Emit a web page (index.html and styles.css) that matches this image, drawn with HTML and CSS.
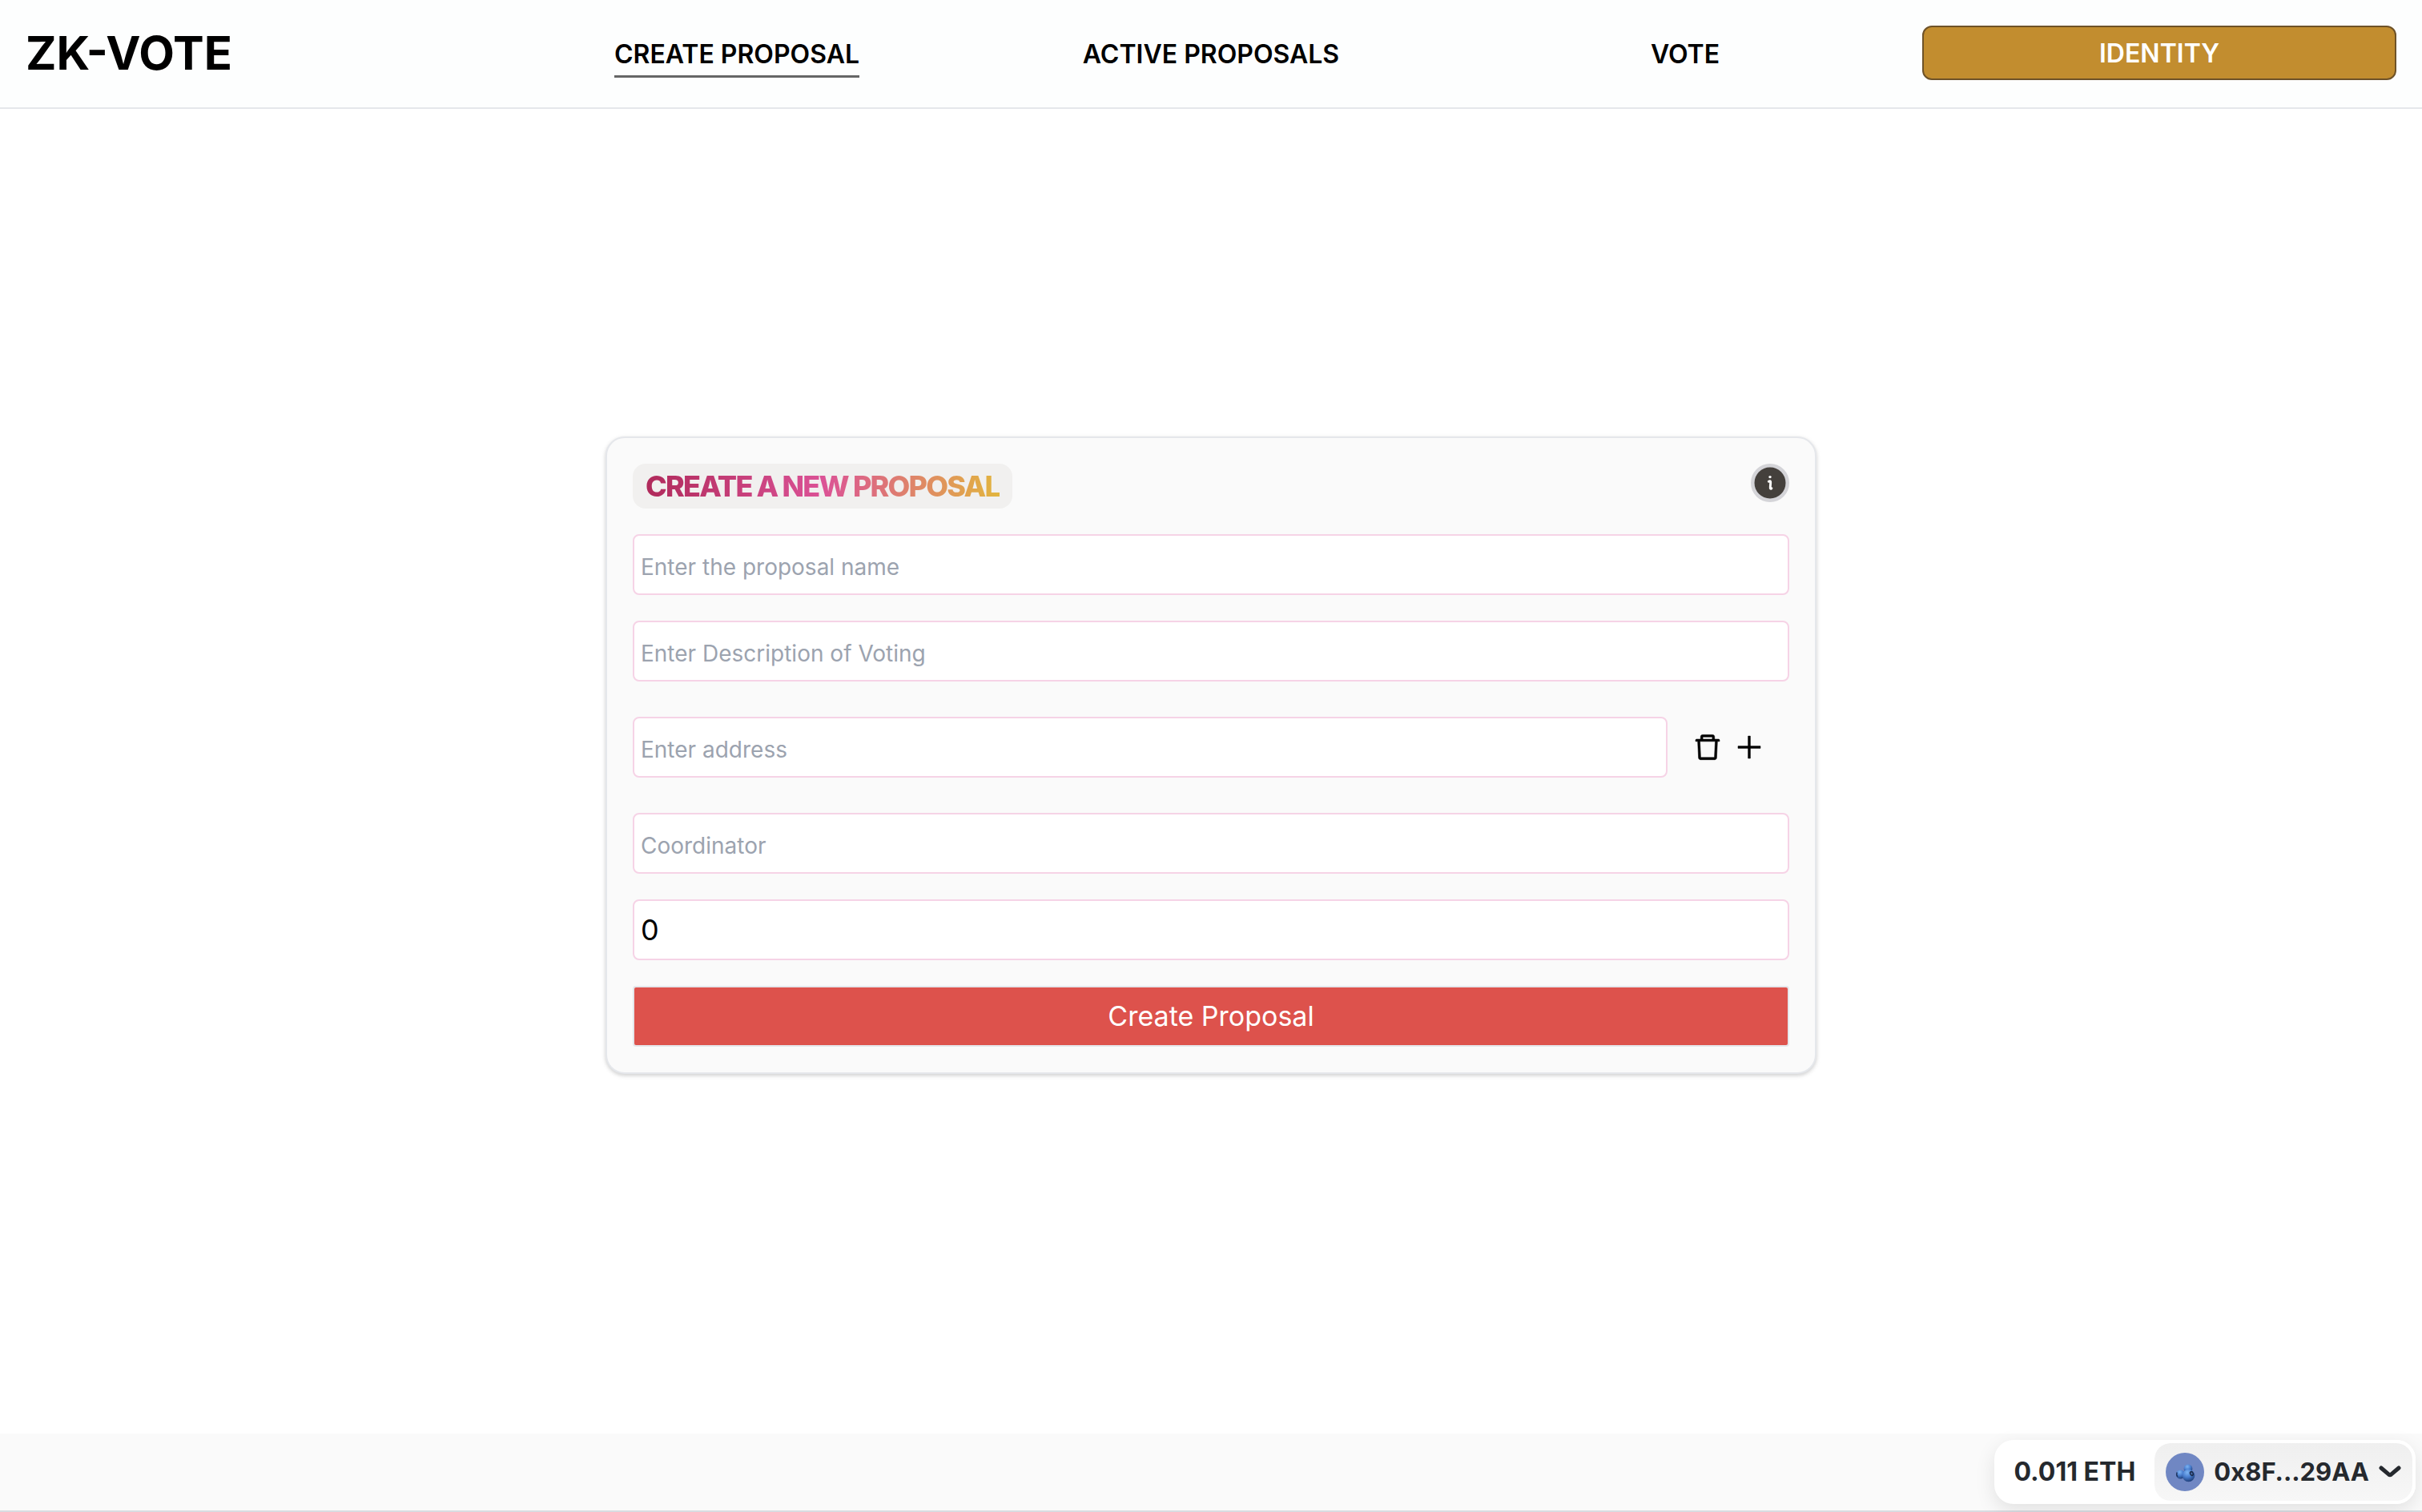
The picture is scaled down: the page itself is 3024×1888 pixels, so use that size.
FILE: index.html
```html
<!DOCTYPE html>
<html lang="en">
<head>
<meta charset="utf-8">
<meta name="viewport" content="width=device-width, initial-scale=1">
<title>ZK-VOTE</title>
<link rel="stylesheet" href="styles.css">
</head>
<body>
<header class="topbar">
  <h1 class="brand">ZK-VOTE</h1>
  <nav class="nav" aria-label="Main">
    <a class="nav-link nav-link-active" href="#create" aria-current="page">CREATE PROPOSAL</a>
    <a class="nav-link" href="#active">ACTIVE PROPOSALS</a>
    <a class="nav-link" href="#vote">VOTE</a>
  </nav>
  <button class="identity" type="button">IDENTITY</button>
</header>

<main class="content">
  <form class="card">
    <div class="card-head">
      <h2 class="chip"><span class="chip-text">CREATE A NEW PROPOSAL</span></h2>
      <button class="info" type="button" aria-label="Information">
        <svg viewBox="0 0 48 48" aria-hidden="true">
          <circle cx="24" cy="24" r="24" fill="#d4d4d8"/>
          <circle cx="24" cy="24" r="19.5" fill="#44403c"/>
          <circle cx="24" cy="16.6" r="1.7" fill="#fff"/>
          <path d="M22.3 22.2Q25 20.6 24.7 23.6L24.3 28.8Q24 32.4 25.9 30.8" fill="none" stroke="#fff" stroke-width="2.9" stroke-linecap="round" stroke-linejoin="round"/>
        </svg>
      </button>
    </div>
    <input class="field" type="text" placeholder="Enter the proposal name" aria-label="Proposal name">
    <input class="field" type="text" placeholder="Enter Description of Voting" aria-label="Description of voting">
    <div class="address-row">
      <input class="field" type="text" placeholder="Enter address" aria-label="Address">
      <div class="actions">
        <button class="icon-button" type="button" aria-label="Remove address">
          <svg viewBox="0 0 1024 1024" stroke="currentColor" stroke-width="14" aria-hidden="true"><path d="M360 184h-8c4.400 0 8-3.600 8-8v8h304v-8c0 4.400 3.600 8 8 8h-8v72h72v-80c0-35.300-28.700-64-64-64H352c-35.300 0-64 28.700-64 64v80h72v-72zm504 72H160c-17.700 0-32 14.300-32 32v32c0 4.400 3.600 8 8 8h60.400l24.700 523c1.600 34.100 29.800 61 63.900 61h454c34.200 0 62.300-26.800 63.900-61l24.700-523H888c4.400 0 8-3.600 8-8v-32c0-17.700-14.300-32-32-32zM731.300 840H292.700l-24.200-512h487l-24.200 512z"/></svg>
        </button>
        <button class="icon-button" type="button" aria-label="Add address">
          <svg viewBox="0 0 1024 1024" stroke="currentColor" stroke-width="10" aria-hidden="true"><path d="M482 152h60q8 0 8 8v704q0 8-8 8h-60q-8 0-8-8V160q0-8 8-8z"/><path d="M160 474h704q8 0 8 8v60q0 8-8 8H160q-8 0-8-8v-60q0-8 8-8z"/></svg>
        </button>
      </div>
    </div>
    <input class="field" type="text" placeholder="Coordinator" aria-label="Coordinator">
    <input class="field" type="text" inputmode="numeric" value="0" aria-label="Duration">
    <button class="submit" type="submit">Create Proposal</button>
  </form>
</main>

<footer class="footer">
  <div class="wallet">
    <span class="balance">0.011 ETH</span>
    <button class="account" type="button">
      <svg class="avatar" viewBox="0 0 48 48" aria-hidden="true">
        <defs>
          <radialGradient id="berry" cx="0.4" cy="0.25" r="0.75">
            <stop offset="0" stop-color="#7db4f2"/>
            <stop offset="0.5" stop-color="#4a7fd0"/>
            <stop offset="1" stop-color="#1f3f7a"/>
          </radialGradient>
        </defs>
        <circle cx="24" cy="24" r="24" fill="#7087c3"/>
        <circle cx="18.5" cy="27" r="5.6" fill="url(#berry)"/>
        <path d="M14.2 24.5q-1.400 3 .6 5.600" fill="none" stroke="#20365f" stroke-width="1.4"/>
        <circle cx="28" cy="20" r="5.400" fill="url(#berry)"/>
        <circle cx="28.5" cy="28.5" r="7.8" fill="url(#berry)"/>
        <ellipse cx="32.4" cy="26" rx="2.5" ry="3.2" fill="#1c2b4a" transform="rotate(-25 32.4 26)"/>
        <ellipse cx="32.4" cy="26" rx="1" ry="1.6" fill="#4b6fae" transform="rotate(-25 32.4 26)"/>
      </svg>
      <span class="account-name">0x8F...29AA</span>
      <svg class="chevron" viewBox="0 0 28 16" aria-hidden="true"><path d="M3 3l9.600 8.200q1.400 1.100 2.800 0L25 3" fill="none" stroke="#25292e" stroke-width="5" stroke-linecap="round" stroke-linejoin="round"/></svg>
    </button>
  </div>
</footer>
</body>
</html>
```
FILE: styles.css
```css
* {
  box-sizing: border-box;
}

body {
  margin: 0;
  min-height: 100vh;
  display: flex;
  flex-direction: column;
  background: #fff;
  color: #000;
  font-family: Inter, "Liberation Sans", sans-serif;
  font-size: 32px;
  line-height: 48px;
}

button,
input {
  font: inherit;
  color: inherit;
  margin: 0;
}

button {
  cursor: pointer;
}

svg {
  display: block;
}

.topbar {
  display: grid;
  grid-template-columns: repeat(5, 1fr);
  align-items: center;
  padding: 32px 32px 34px;
  background: #fdfefe;
  border-bottom: 2px solid #e5e7eb;
}

.brand {
  margin: 0;
  font-size: 58px;
  line-height: 68px;
  font-weight: 700;
}

.nav {
  grid-column: span 3;
  display: grid;
  grid-template-columns: repeat(3, 1fr);
  justify-items: center;
}

.nav-link {
  color: #000;
  font-weight: 600;
  line-height: 52px;
  border-bottom: 3px solid transparent;
  margin-top: 6px;
  text-decoration: none;
}

.nav-link-active {
  border-bottom-color: #666;
}

.identity {
  height: 68px;
  padding: 2px 0 0;
  border: 2px solid #6e5228;
  border-radius: 12px;
  background: #c28d2f;
  color: #fff;
  font-weight: 600;
}

.content {
  flex: 1;
  display: flex;
  align-items: center;
  justify-content: center;
  padding: 32px 0 72px;
}

.card {
  width: 50%;
  display: flex;
  flex-direction: column;
  gap: 32px;
  padding: 32px;
  background: #fafafa;
  border: 2px solid #e5e7eb;
  border-radius: 24px;
  box-shadow: 0 2px 6px rgba(0, 0, 0, 0.1), 0 2px 4px rgba(0, 0, 0, 0.1);
}

.card-head {
  display: flex;
  justify-content: space-between;
  align-items: flex-start;
}

.chip {
  margin: 0;
  padding: 0 16px;
  border-radius: 16px;
  background: #f1f0ef;
  font-size: 36px;
  line-height: 56px;
  font-weight: 800;
  letter-spacing: -0.05em;
}

.chip-text {
  background: linear-gradient(to right, #b02a5b, #db5296 50%, #e2b53e);
  background-clip: text;
  -webkit-background-clip: text;
  color: transparent;
}

.info {
  width: 48px;
  height: 48px;
  padding: 0;
  border: 0;
  border-radius: 50%;
  background: none;
}

.field {
  width: 100%;
  height: 76px;
  padding: 0 8px;
  border: 2px solid #f6d3e6;
  border-radius: 8px;
  background: #fff;
  font-size: 36px;
}

.field::placeholder {
  color: #9ca3af;
  font-size: 28px;
  opacity: 1;
}

.address-row {
  display: flex;
  align-items: center;
  gap: 30px;
  padding: 12px 30px 12px 0;
}

.address-row .field {
  flex: 1;
}

.actions {
  display: flex;
  gap: 12px;
}

.icon-button {
  width: 40px;
  height: 40px;
  padding: 0;
  border: 0;
  background: none;
}

.submit {
  height: 76px;
  padding: 0;
  border: 2px solid #e5e7eb;
  border-radius: 4px;
  background: #dd524c;
  color: #fff;
  font-size: 34px;
}

.footer {
  display: flex;
  justify-content: flex-end;
  padding: 8px;
  background: #fafafa;
  border-bottom: 2px solid #d9dce1;
}

.wallet {
  display: flex;
  align-items: center;
  border-radius: 24px;
  background: #fff;
  box-shadow: 0 8px 24px rgba(0, 0, 0, 0.1);
  color: #25292e;
  font-weight: 700;
}

.balance {
  padding: 0 20px 0 24px;
}

.account {
  display: flex;
  align-items: center;
  gap: 12px;
  height: 80px;
  padding: 0 14px;
  border: 4px solid #fff;
  border-radius: 24px;
  background: linear-gradient(#efefef, #f7f7f7) padding-box;
  font-weight: 700;
}

.account-name {
  font-size: 31px;
}

.avatar {
  width: 48px;
  height: 48px;
}

.chevron {
  width: 28px;
  height: 16px;
}
```
